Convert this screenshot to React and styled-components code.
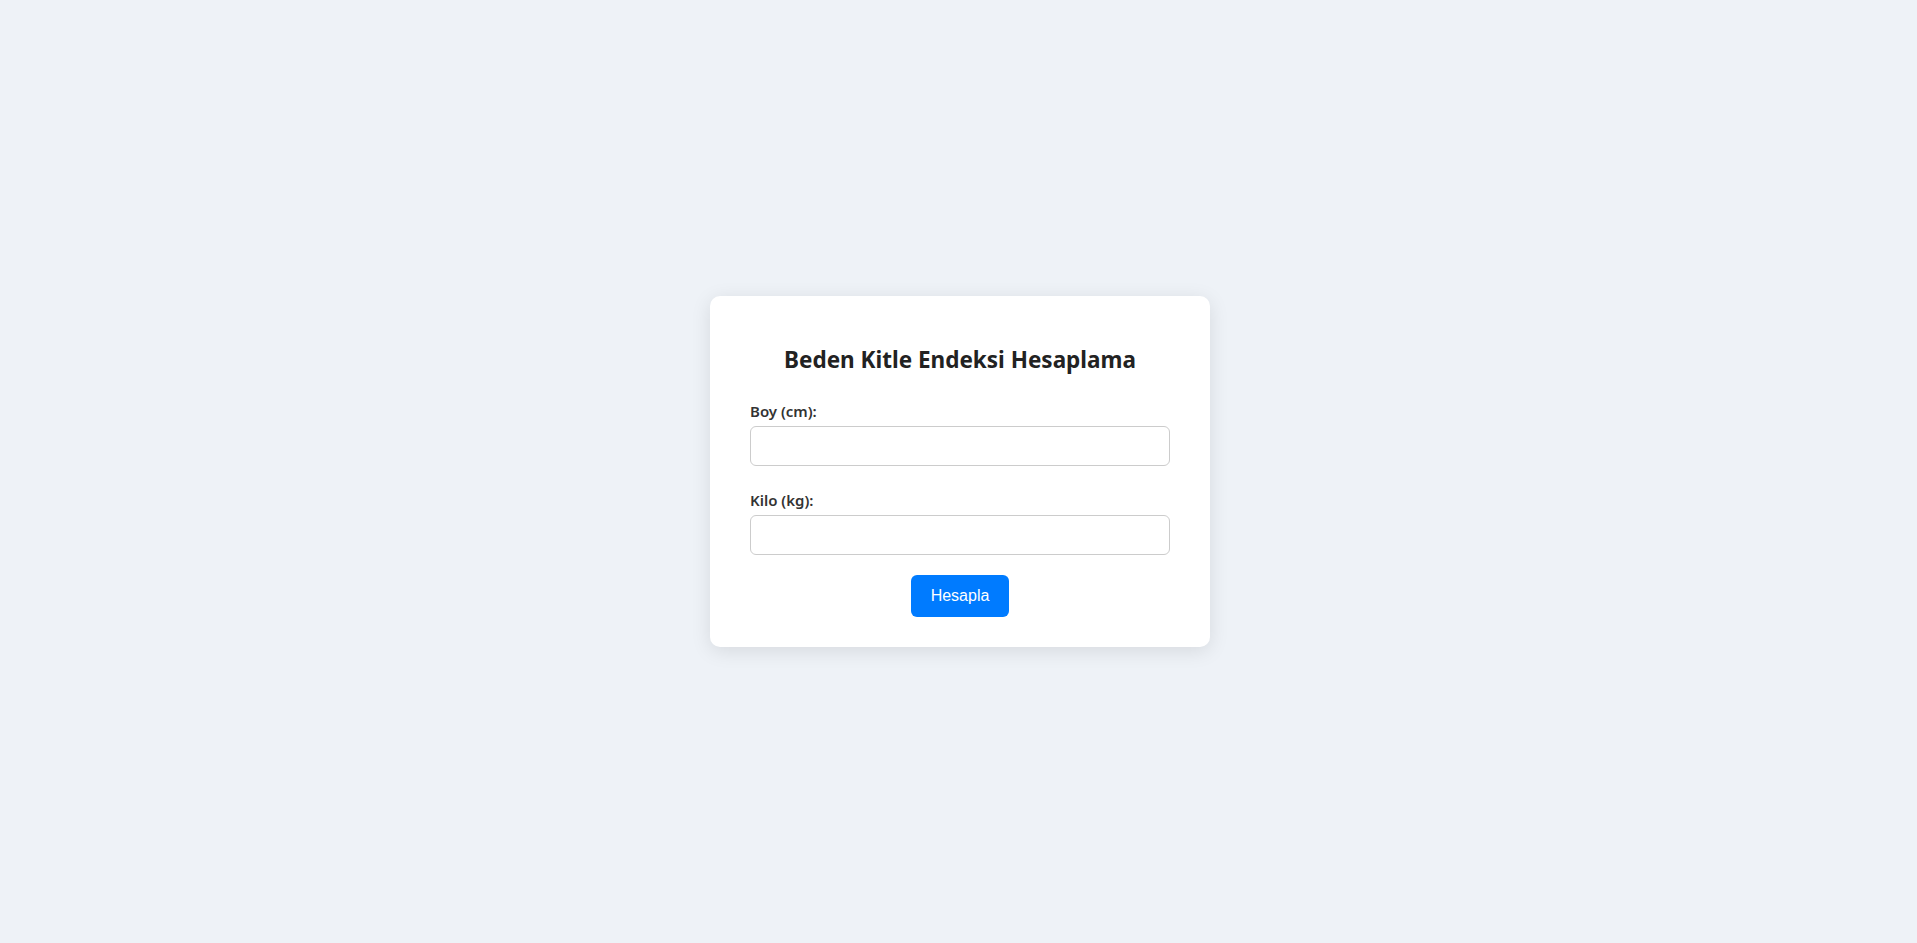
import React, { useState } from 'react'
import styled, { createGlobalStyle } from 'styled-components'

const GlobalStyle = createGlobalStyle`
  body {
    margin: 0;
    background: #eef2f7;
    font-family: 'Noto Sans', 'Open Sans', sans-serif;
  }
`

const App = () => {
  const [height, setHeight] = useState('')
  const [weight, setWeight] = useState('')

  const handleSubmit = (e) => {
    e.preventDefault()
  }

  return (
    <Wrapper>
      <GlobalStyle />
      <Card onSubmit={handleSubmit}>
        <h2>Beden Kitle Endeksi Hesaplama</h2>
        <Field>
          <label htmlFor='boy'>Boy (cm):</label>
          <input
            id='boy'
            type='number'
            value={height}
            onChange={(e) => setHeight(e.target.value)}
          />
        </Field>
        <Field>
          <label htmlFor='kilo'>Kilo (kg):</label>
          <input
            id='kilo'
            type='number'
            value={weight}
            onChange={(e) => setWeight(e.target.value)}
          />
        </Field>
        <Button type='submit'>Hesapla</Button>
      </Card>
    </Wrapper>
  )
}

const Wrapper = styled.div`
  min-height: 100vh;
  display: flex;
  align-items: center;
  justify-content: center;
  padding-left: 3px;
  box-sizing: border-box;
`

const Card = styled.form`
  width: 500px;
  box-sizing: border-box;
  padding: 30px 40px;
  background: #fff;
  border-radius: 10px;
  box-shadow: 0 4px 20px rgba(0, 0, 0, 0.1);
  display: flex;
  flex-direction: column;

  h2 {
    margin: 18px 0 25px;
    font-size: 22.5px;
    line-height: 32px;
    font-weight: 700;
    text-align: center;
    color: #222;
  }
`

const Field = styled.div`
  display: flex;
  flex-direction: column;
  margin-bottom: 24px;

  &:last-of-type {
    margin-bottom: 20px;
  }

  label {
    font-size: 15px;
    line-height: 20px;
    font-weight: 600;
    color: #333;
    margin-bottom: 5px;
  }

  input {
    height: 40px;
    box-sizing: border-box;
    border: 1px solid #ccc;
    border-radius: 6px;
    padding: 0 10px;
    font-size: 16px;
    outline: none;
    appearance: textfield;
  }
`

const Button = styled.button`
  align-self: center;
  padding: 12px 20px;
  border: none;
  border-radius: 6px;
  background: #007bff;
  color: #fff;
  font-family: 'Liberation Sans', Arial, sans-serif;
  font-size: 16px;
  line-height: 18px;
  cursor: pointer;
`

export default App
